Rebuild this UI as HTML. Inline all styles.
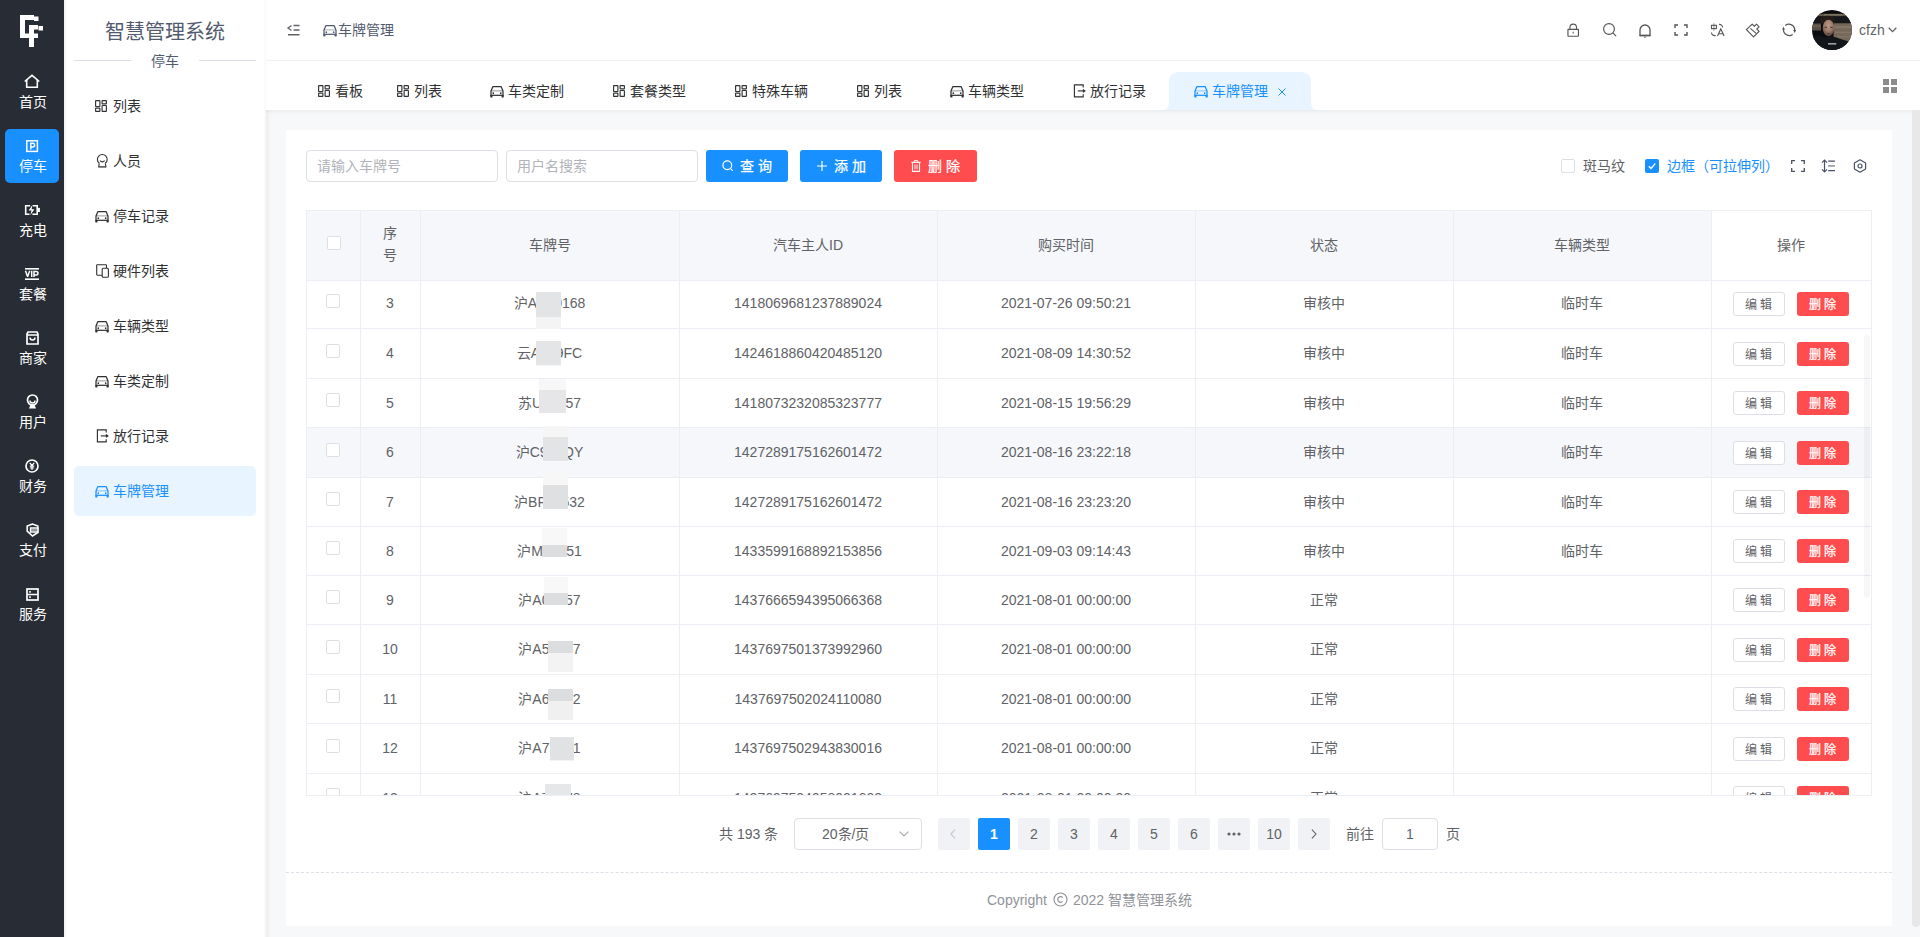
<!DOCTYPE html>
<html lang="zh-CN">
<head>
<meta charset="utf-8">
<title>车牌管理</title>
<style>
*{box-sizing:border-box;margin:0;padding:0}
html,body{width:1920px;height:937px;overflow:hidden;background:#f6f8f9;font-family:"Liberation Sans",sans-serif;font-size:14px;color:#606266}
.a{position:absolute}
.t{position:absolute;white-space:nowrap;line-height:20px}
svg{position:absolute;overflow:visible}
</style>
</head>
<body>
<div class="a" style="left:0px;top:0px;width:64px;height:937px;background:#282c34"></div>
<div class="a" style="left:64px;top:0px;width:202px;height:937px;background:#fff"></div>
<div class="a" style="left:64px;top:0px;width:3px;height:937px;background:linear-gradient(90deg,rgba(0,0,0,.06),rgba(0,0,0,0))"></div>
<div class="a" style="left:263px;top:0px;width:3px;height:937px;background:linear-gradient(90deg,rgba(0,0,0,0),rgba(0,0,0,.03))"></div>
<div class="a" style="left:266px;top:110px;width:5px;height:827px;background:linear-gradient(90deg,rgba(0,0,0,.045),rgba(0,0,0,0))"></div>
<div class="a" style="left:266px;top:0px;width:1654px;height:60px;background:#fff"></div>
<div class="a" style="left:266px;top:60px;width:1654px;height:1px;background:#f0f1f3"></div>
<div class="a" style="left:266px;top:61px;width:1654px;height:49px;background:#fff"></div>
<div class="a" style="left:266px;top:110px;width:1654px;height:4px;background:linear-gradient(180deg,rgba(0,0,0,.05),rgba(0,0,0,0))"></div>
<div class="a" style="left:286px;top:130px;width:1606px;height:796px;background:#fff"></div>
<div class="a" style="left:1912px;top:110px;width:8px;height:817px;background:#e8e8e8;border-radius:0 0 4px 4px"></div>
<svg style="left:0px;top:0px" width="64" height="60" viewBox="0 0 64 60"><g fill="#fff"><rect x="20" y="15" width="14" height="5"/><rect x="20" y="15" width="5" height="23"/><rect x="20" y="33.5" width="18" height="4.5"/><rect x="34" y="16.5" width="4.5" height="4.5"/><rect x="29" y="25" width="5" height="22"/><rect x="29" y="25" width="9" height="4.5"/><rect x="38.5" y="26" width="4.5" height="4.5"/></g><rect x="25" y="20" width="9" height="5" fill="#282c34"/></svg>
<div class="a" style="left:5px;top:129px;width:54px;height:54px;background:#1890ff;border-radius:5px"></div>
<svg style="left:24px;top:74px" width="16" height="15" viewBox="0 0 16 15"><path d="M0.7 7.5L8 1.3l7.3 6.2" fill="none" stroke="#fff" stroke-width="1.6"/><path d="M2.7 5.8V13.3H13.3V5.8" fill="none" stroke="#fff" stroke-width="1.6"/></svg>
<svg style="left:26px;top:140px" width="12" height="12" viewBox="0 0 12 12"><rect x="0.8" y="0.8" width="10.6" height="10.6" fill="none" stroke="#fff" stroke-width="1.5"/><path d="M4.8 9.6V3.2h1.9a1.9 1.9 0 0 1 0 3.8H4.8" fill="none" stroke="#fff" stroke-width="1.4"/></svg>
<svg style="left:24px;top:204px" width="17" height="12" viewBox="0 0 17 12"><path d="M6.2 1.7H1.7v8.5h3.8M8.7 1.7h4.5v8.5H8.4" fill="none" stroke="#fff" stroke-width="1.6"/><path d="M8.4 0.9L4.6 6.4h2.9L6.3 11.2l4.1-5.9H7.6z" fill="#fff"/><rect x="14" y="3.9" width="1.9" height="4.1" fill="#fff"/></svg>
<svg style="left:25px;top:268px" width="14" height="12" viewBox="0 0 14 12"><rect x="0" y="0" width="14" height="1.6" fill="#fff"/><rect x="0" y="10.4" width="14" height="1.6" fill="#fff"/><path d="M0.5 2.8L2.6 8.7 4.7 2.8" fill="none" stroke="#fff" stroke-width="1.5" stroke-linejoin="bevel"/><path d="M6.7 2.8V9M9 9V3.55h2.2a1.75 1.75 0 0 1 0 3.5H9" fill="none" stroke="#fff" stroke-width="1.5"/></svg>
<svg style="left:26px;top:331px" width="13" height="14" viewBox="0 0 13 14"><path d="M2 1h9l1 2v10H1V3z" fill="none" stroke="#fff" stroke-width="1.7"/><path d="M1 4h11" stroke="#fff" stroke-width="1.5"/><path d="M4 6.5a2.5 2.5 0 0 0 5 0" fill="none" stroke="#fff" stroke-width="1.5"/></svg>
<svg style="left:26px;top:394px" width="13" height="15" viewBox="0 0 13 15"><circle cx="6.5" cy="6" r="5" fill="none" stroke="#fff" stroke-width="1.7"/><path d="M4 6.5a2.5 2.5 0 0 0 5 0" fill="none" stroke="#fff" stroke-width="1.4"/><path d="M3 14.5l1.5-4h4l1.5 4z" fill="#fff"/></svg>
<svg style="left:25px;top:459px" width="14" height="14" viewBox="0 0 14 14"><circle cx="7" cy="7" r="6" fill="none" stroke="#fff" stroke-width="1.7"/><path d="M4.8 3.8L7 6.5l2.2-2.7M7 6.5V11M4.8 7.2h4.4M4.8 9h4.4" fill="none" stroke="#fff" stroke-width="1.2"/></svg>
<svg style="left:26px;top:523px" width="13" height="14" viewBox="0 0 13 14"><path d="M6.5 1L1.2 3v5.2L6.5 13l5.3-3.5V3z" fill="none" stroke="#fff" stroke-width="1.6"/><rect x="4.2" y="5" width="8" height="4" fill="#282c34"/><path d="M4.5 5h7.5v4H4.5z" fill="none" stroke="#fff" stroke-width="1.4"/><path d="M4.5 7h7.5" stroke="#fff" stroke-width="1"/></svg>
<svg style="left:26px;top:588px" width="13" height="13" viewBox="0 0 13 13"><rect x="1" y="1" width="11" height="11" fill="none" stroke="#fff" stroke-width="1.7"/><path d="M1 6.5h11" stroke="#fff" stroke-width="1.5"/><rect x="3" y="3.2" width="2" height="1.4" fill="#fff"/><rect x="3" y="8.4" width="2" height="1.4" fill="#fff"/></svg>
<div class="t" style="left:3.0px;top:92px;width:60px;text-align:center;color:#fff">首页</div>
<div class="t" style="left:3.0px;top:156px;width:60px;text-align:center;color:#fff">停车</div>
<div class="t" style="left:3.0px;top:220px;width:60px;text-align:center;color:#fff">充电</div>
<div class="t" style="left:3.0px;top:284px;width:60px;text-align:center;color:#fff">套餐</div>
<div class="t" style="left:3.0px;top:348px;width:60px;text-align:center;color:#fff">商家</div>
<div class="t" style="left:3.0px;top:412px;width:60px;text-align:center;color:#fff">用户</div>
<div class="t" style="left:3.0px;top:476px;width:60px;text-align:center;color:#fff">财务</div>
<div class="t" style="left:3.0px;top:540px;width:60px;text-align:center;color:#fff">支付</div>
<div class="t" style="left:3.0px;top:604px;width:60px;text-align:center;color:#fff">服务</div>
<div class="t" style="left:105px;top:18px;font-size:20px;line-height:28px;color:#515a6e">智慧管理系统</div>
<div class="a" style="left:74px;top:60px;width:57px;height:1px;background:#dcdfe6"></div>
<div class="a" style="left:199px;top:60px;width:57px;height:1px;background:#dcdfe6"></div>
<div class="t" style="left:151px;top:51px;color:#515a6e">停车</div>
<div class="a" style="left:74px;top:466px;width:182px;height:50px;background:#e8f4ff;border-radius:5px"></div>
<svg style="left:95px;top:100px" width="12" height="12" viewBox="0 0 12 12"><g fill="none" stroke="#303133" stroke-width="1.15"><rect x="0.6" y="0.6" width="4.3" height="5.9" rx=".5"/><rect x="7.1" y="0.6" width="4.3" height="3.3" rx=".5"/><rect x="0.6" y="8.1" width="4.3" height="3.3" rx=".5"/><rect x="7.1" y="5.5" width="4.3" height="5.9" rx=".5"/></g></svg>
<div class="t" style="left:113px;top:96px;color:#303133">列表</div>
<svg style="left:96px;top:154px" width="12" height="14" viewBox="0 0 12 14"><path d="M3.3 9.3A4.9 4.9 0 1 1 9.3 9.3" fill="none" stroke="#303133" stroke-width="1.1"/><path d="M3.9 6.7Q6.3 9 8.7 6.7" fill="none" stroke="#303133" stroke-width="1.1"/><path d="M3.3 9.3L2.7 12.6M9.3 9.3l.6 3.3" fill="none" stroke="#303133" stroke-width="1.1"/><path d="M2.2 12.9h8.2" stroke="#303133" stroke-width="1.3"/></svg>
<div class="t" style="left:113px;top:151px;color:#303133">人员</div>
<svg style="left:95px;top:210px" width="14" height="13" viewBox="0 0 14 13"><path d="M1 11.6V6.1L2.8 1.7h8.4L13 6.1v5.5" fill="none" stroke="#303133" stroke-width="1.25" stroke-linejoin="round"/><path d="M1 5.9h12" stroke="#303133" stroke-width="1" opacity=".5"/><path d="M1 10.3h12" stroke="#303133" stroke-width="1.25"/><circle cx="3.3" cy="8.2" r=".85" fill="#303133"/><circle cx="10.7" cy="8.2" r=".85" fill="#303133"/><rect x="0.35" y="10" width="2.1" height="2.5" rx=".6" fill="#303133"/><rect x="11.55" y="10" width="2.1" height="2.5" rx=".6" fill="#303133"/></svg>
<div class="t" style="left:113px;top:206px;color:#303133">停车记录</div>
<svg style="left:96px;top:264px" width="13" height="14" viewBox="0 0 13 14"><path d="M6.2 11.2H1.3a.6.6 0 0 1-.6-.6V1.3a.6.6 0 0 1 .6-.6h8.6a.6.6 0 0 1 .6.6v2.8" fill="none" stroke="#303133" stroke-width="1.1"/><rect x="6.2" y="4.2" width="6.2" height="9" rx="1" fill="none" stroke="#303133" stroke-width="1.1"/></svg>
<div class="t" style="left:113px;top:261px;color:#303133">硬件列表</div>
<svg style="left:95px;top:320px" width="14" height="13" viewBox="0 0 14 13"><path d="M1 11.6V6.1L2.8 1.7h8.4L13 6.1v5.5" fill="none" stroke="#303133" stroke-width="1.25" stroke-linejoin="round"/><path d="M1 5.9h12" stroke="#303133" stroke-width="1" opacity=".5"/><path d="M1 10.3h12" stroke="#303133" stroke-width="1.25"/><circle cx="3.3" cy="8.2" r=".85" fill="#303133"/><circle cx="10.7" cy="8.2" r=".85" fill="#303133"/><rect x="0.35" y="10" width="2.1" height="2.5" rx=".6" fill="#303133"/><rect x="11.55" y="10" width="2.1" height="2.5" rx=".6" fill="#303133"/></svg>
<div class="t" style="left:113px;top:316px;color:#303133">车辆类型</div>
<svg style="left:95px;top:375px" width="14" height="13" viewBox="0 0 14 13"><path d="M1 11.6V6.1L2.8 1.7h8.4L13 6.1v5.5" fill="none" stroke="#303133" stroke-width="1.25" stroke-linejoin="round"/><path d="M1 5.9h12" stroke="#303133" stroke-width="1" opacity=".5"/><path d="M1 10.3h12" stroke="#303133" stroke-width="1.25"/><circle cx="3.3" cy="8.2" r=".85" fill="#303133"/><circle cx="10.7" cy="8.2" r=".85" fill="#303133"/><rect x="0.35" y="10" width="2.1" height="2.5" rx=".6" fill="#303133"/><rect x="11.55" y="10" width="2.1" height="2.5" rx=".6" fill="#303133"/></svg>
<div class="t" style="left:113px;top:371px;color:#303133">车类定制</div>
<svg style="left:96px;top:429px" width="13" height="14" viewBox="0 0 13 14"><path d="M10.2 3.6V0.9H1.4v12h8.8v-2.7" fill="none" stroke="#303133" stroke-width="1.15"/><path d="M4.8 6.9h5.4" stroke="#303133" stroke-width="1.15"/><path d="M9.9 4.7L12.8 6.9 9.9 9.1z" fill="#303133"/></svg>
<div class="t" style="left:113px;top:426px;color:#303133">放行记录</div>
<svg style="left:95px;top:485px" width="14" height="13" viewBox="0 0 14 13"><path d="M1 11.6V6.1L2.8 1.7h8.4L13 6.1v5.5" fill="none" stroke="#1890ff" stroke-width="1.25" stroke-linejoin="round"/><path d="M1 5.9h12" stroke="#1890ff" stroke-width="1" opacity=".5"/><path d="M1 10.3h12" stroke="#1890ff" stroke-width="1.25"/><circle cx="3.3" cy="8.2" r=".85" fill="#1890ff"/><circle cx="10.7" cy="8.2" r=".85" fill="#1890ff"/><rect x="0.35" y="10" width="2.1" height="2.5" rx=".6" fill="#1890ff"/><rect x="11.55" y="10" width="2.1" height="2.5" rx=".6" fill="#1890ff"/></svg>
<div class="t" style="left:113px;top:481px;color:#1890ff">车牌管理</div>
<svg style="left:287px;top:24px" width="13" height="12" viewBox="0 0 13 12"><path d="M4.5 1.5L1 4l3.5 2.5" fill="none" stroke="#606266" stroke-width="1.3"/><path d="M6.5 1.5h6M6.5 6h6M1 10.8h11.5" stroke="#606266" stroke-width="1.4"/></svg>
<svg style="left:323px;top:24px" width="14" height="13" viewBox="0 0 14 13"><path d="M1 11.6V6.1L2.8 1.7h8.4L13 6.1v5.5" fill="none" stroke="#515a6e" stroke-width="1.25" stroke-linejoin="round"/><path d="M1 5.9h12" stroke="#515a6e" stroke-width="1" opacity=".5"/><path d="M1 10.3h12" stroke="#515a6e" stroke-width="1.25"/><circle cx="3.3" cy="8.2" r=".85" fill="#515a6e"/><circle cx="10.7" cy="8.2" r=".85" fill="#515a6e"/><rect x="0.35" y="10" width="2.1" height="2.5" rx=".6" fill="#515a6e"/><rect x="11.55" y="10" width="2.1" height="2.5" rx=".6" fill="#515a6e"/></svg>
<div class="t" style="left:338px;top:20px;color:#515a6e">车牌管理</div>
<svg style="left:1567px;top:23px" width="13" height="14" viewBox="0 0 13 14"><path d="M2.9 6.3V4.4a3.3 3.3 0 0 1 6.6 0v1.9" fill="none" stroke="#555555" stroke-width="1.1"/><rect x="0.95" y="6.3" width="10.5" height="6.9" rx=".4" fill="none" stroke="#555555" stroke-width="1.15"/><path d="M6.2 8.8v1.6" stroke="#555555" stroke-width="1.1"/></svg>
<svg style="left:1603px;top:23px" width="14" height="14" viewBox="0 0 14 14"><circle cx="6" cy="6" r="5.4" fill="none" stroke="#555555" stroke-width="1.15"/><path d="M9.9 9.9l3.2 3.2" stroke="#555555" stroke-width="1.15"/></svg>
<svg style="left:1639px;top:23px" width="12" height="15" viewBox="0 0 12 15"><path d="M1 12.5V7a5 5 0 0 1 10 0v5.5z" fill="none" stroke="#555555" stroke-width="1.3" stroke-linejoin="round"/><path d="M0.5 12.5h11" stroke="#555555" stroke-width="1.3"/><path d="M4.5 13.8h3L6 15z" fill="#555555"/></svg>
<svg style="left:1674px;top:24px" width="14" height="12" viewBox="0 0 14 12"><path d="M1 4V1h3M10 1h3v3M13 8v3h-3M4 11H1V8" fill="none" stroke="#555555" stroke-width="1.4"/></svg>
<svg style="left:1710px;top:23px" width="15" height="14" viewBox="0 0 15 14"><rect x="1.5" y="2.3" width="4.9" height="3.3" fill="none" stroke="#555555" stroke-width="1.1"/><path d="M3.95 0.3V7.8" stroke="#555555" stroke-width="1" opacity=".65"/><path d="M9.1 1.4A3.1 3.1 0 0 1 12.6 4.4M1.5 9.4A3.1 3.1 0 0 0 5.7 12.4" fill="none" stroke="#555555" stroke-width="1.1"/><path d="M7.5 12.9L10.8 5.9 14.1 12.9M8.7 10.7h4.2" fill="none" stroke="#555555" stroke-width="1.1"/></svg>
<svg style="left:1745px;top:23px" width="15" height="15" viewBox="0 0 15 15"><path d="M1.4 6.6L7.2 1.1 9.3 3.4 11.5 1.1 14.1 3.8 11.8 6 14.1 8.3 8.5 13.8Z" fill="none" stroke="#555555" stroke-width="1.15" stroke-linejoin="round"/><path d="M5.3 5.4l6.2 5.3" stroke="#555555" stroke-width="1.1"/></svg>
<svg style="left:1782px;top:23px" width="15" height="14" viewBox="0 0 15 14"><path d="M3.3 2.5A5.8 5.8 0 0 1 12.7 7.3M10.7 11.4A5.8 5.8 0 0 1 1.5 6.3" fill="none" stroke="#555555" stroke-width="1.2"/><path d="M11.2 7.1H14.2L12.7 9.9ZM0 6.5H3L1.5 3.7Z" fill="#555555"/></svg>
<svg style="left:1812px;top:10px" width="40" height="40" viewBox="0 0 40 40"><defs><clipPath id="av"><circle cx="20" cy="20" r="20"/></clipPath><radialGradient id="fc" cx=".5" cy=".35" r=".65"><stop offset="0" stop-color="#bd998a"/><stop offset=".55" stop-color="#9c7868"/><stop offset="1" stop-color="#5a463e"/></radialGradient></defs><g clip-path="url(#av)"><rect width="40" height="40" fill="#0b0c0f"/><rect x="3" y="3.8" width="32" height="2.6" fill="#5f574b"/><rect x="12" y="4.2" width="18" height="1.2" fill="#8e8270" opacity=".8"/><rect x="0" y="6.4" width="40" height="7" fill="#15171b"/><path d="M21.5 13.2H40V31L30 32 21.5 27z" fill="#75685a"/><path d="M22 16h18v2.2H22zM23 21.5h17v1.8H23zM25 26h15v1.5H25z" fill="#8f826e" opacity=".55"/><path d="M0 13.5H9V20.5H0z" fill="#5a5145"/><path d="M0 15.5h8.5v1.6H0z" fill="#7a6e5e" opacity=".6"/><ellipse cx="15.5" cy="10.5" rx="7.5" ry="4.8" fill="#231c19"/><ellipse cx="16.5" cy="18" rx="5.8" ry="8.3" fill="url(#fc)"/><path d="M12.6 17.3h2.4M18.2 17.3h2.4" stroke="#3f302a" stroke-width="1"/><path d="M14.8 23.8h3.6" stroke="#4f3a33" stroke-width="1"/><path d="M0 26.5C5 25 9 26 13 27.5L20 26.5C26 27.5 32 30.5 40 32.5V40H0z" fill="#121519"/><rect x="16" y="33" width="8.3" height="1.6" fill="#cfcfcf" opacity=".75"/></g></svg>
<div class="t" style="left:1859px;top:20px;color:#606266">cfzh</div>
<svg style="left:1888px;top:27px" width="9" height="6" viewBox="0 0 9 6"><path d="M0.7 0.8L4.5 4.6 8.3 0.8" fill="none" stroke="#606266" stroke-width="1.3"/></svg>
<svg style="left:1163px;top:72px" width="154" height="38" viewBox="0 0 154 38"><path d="M0 38C4.5 38 6 34 6 29V10Q6 0 16 0H138Q148 0 148 10V29C148 34 149.5 38 154 38Z" fill="#e8f4ff"/></svg>
<svg style="left:318px;top:85px" width="12" height="12" viewBox="0 0 12 12"><g fill="none" stroke="#303133" stroke-width="1.15"><rect x="0.6" y="0.6" width="4.3" height="5.9" rx=".5"/><rect x="7.1" y="0.6" width="4.3" height="3.3" rx=".5"/><rect x="0.6" y="8.1" width="4.3" height="3.3" rx=".5"/><rect x="7.1" y="5.5" width="4.3" height="5.9" rx=".5"/></g></svg>
<div class="t" style="left:335px;top:81px;color:#303133">看板</div>
<svg style="left:397px;top:85px" width="12" height="12" viewBox="0 0 12 12"><g fill="none" stroke="#303133" stroke-width="1.15"><rect x="0.6" y="0.6" width="4.3" height="5.9" rx=".5"/><rect x="7.1" y="0.6" width="4.3" height="3.3" rx=".5"/><rect x="0.6" y="8.1" width="4.3" height="3.3" rx=".5"/><rect x="7.1" y="5.5" width="4.3" height="5.9" rx=".5"/></g></svg>
<div class="t" style="left:414px;top:81px;color:#303133">列表</div>
<svg style="left:490px;top:85px" width="14" height="13" viewBox="0 0 14 13"><path d="M1 11.6V6.1L2.8 1.7h8.4L13 6.1v5.5" fill="none" stroke="#303133" stroke-width="1.25" stroke-linejoin="round"/><path d="M1 5.9h12" stroke="#303133" stroke-width="1" opacity=".5"/><path d="M1 10.3h12" stroke="#303133" stroke-width="1.25"/><circle cx="3.3" cy="8.2" r=".85" fill="#303133"/><circle cx="10.7" cy="8.2" r=".85" fill="#303133"/><rect x="0.35" y="10" width="2.1" height="2.5" rx=".6" fill="#303133"/><rect x="11.55" y="10" width="2.1" height="2.5" rx=".6" fill="#303133"/></svg>
<div class="t" style="left:508px;top:81px;color:#303133">车类定制</div>
<svg style="left:613px;top:85px" width="12" height="12" viewBox="0 0 12 12"><g fill="none" stroke="#303133" stroke-width="1.15"><rect x="0.6" y="0.6" width="4.3" height="5.9" rx=".5"/><rect x="7.1" y="0.6" width="4.3" height="3.3" rx=".5"/><rect x="0.6" y="8.1" width="4.3" height="3.3" rx=".5"/><rect x="7.1" y="5.5" width="4.3" height="5.9" rx=".5"/></g></svg>
<div class="t" style="left:630px;top:81px;color:#303133">套餐类型</div>
<svg style="left:735px;top:85px" width="12" height="12" viewBox="0 0 12 12"><g fill="none" stroke="#303133" stroke-width="1.15"><rect x="0.6" y="0.6" width="4.3" height="5.9" rx=".5"/><rect x="7.1" y="0.6" width="4.3" height="3.3" rx=".5"/><rect x="0.6" y="8.1" width="4.3" height="3.3" rx=".5"/><rect x="7.1" y="5.5" width="4.3" height="5.9" rx=".5"/></g></svg>
<div class="t" style="left:752px;top:81px;color:#303133">特殊车辆</div>
<svg style="left:857px;top:85px" width="12" height="12" viewBox="0 0 12 12"><g fill="none" stroke="#303133" stroke-width="1.15"><rect x="0.6" y="0.6" width="4.3" height="5.9" rx=".5"/><rect x="7.1" y="0.6" width="4.3" height="3.3" rx=".5"/><rect x="0.6" y="8.1" width="4.3" height="3.3" rx=".5"/><rect x="7.1" y="5.5" width="4.3" height="5.9" rx=".5"/></g></svg>
<div class="t" style="left:874px;top:81px;color:#303133">列表</div>
<svg style="left:950px;top:85px" width="14" height="13" viewBox="0 0 14 13"><path d="M1 11.6V6.1L2.8 1.7h8.4L13 6.1v5.5" fill="none" stroke="#303133" stroke-width="1.25" stroke-linejoin="round"/><path d="M1 5.9h12" stroke="#303133" stroke-width="1" opacity=".5"/><path d="M1 10.3h12" stroke="#303133" stroke-width="1.25"/><circle cx="3.3" cy="8.2" r=".85" fill="#303133"/><circle cx="10.7" cy="8.2" r=".85" fill="#303133"/><rect x="0.35" y="10" width="2.1" height="2.5" rx=".6" fill="#303133"/><rect x="11.55" y="10" width="2.1" height="2.5" rx=".6" fill="#303133"/></svg>
<div class="t" style="left:968px;top:81px;color:#303133">车辆类型</div>
<svg style="left:1073px;top:84px" width="13" height="14" viewBox="0 0 13 14"><path d="M10.2 3.6V0.9H1.4v12h8.8v-2.7" fill="none" stroke="#303133" stroke-width="1.15"/><path d="M4.8 6.9h5.4" stroke="#303133" stroke-width="1.15"/><path d="M9.9 4.7L12.8 6.9 9.9 9.1z" fill="#303133"/></svg>
<div class="t" style="left:1090px;top:81px;color:#303133">放行记录</div>
<svg style="left:1194px;top:85px" width="14" height="13" viewBox="0 0 14 13"><path d="M1 11.6V6.1L2.8 1.7h8.4L13 6.1v5.5" fill="none" stroke="#1890ff" stroke-width="1.25" stroke-linejoin="round"/><path d="M1 5.9h12" stroke="#1890ff" stroke-width="1" opacity=".5"/><path d="M1 10.3h12" stroke="#1890ff" stroke-width="1.25"/><circle cx="3.3" cy="8.2" r=".85" fill="#1890ff"/><circle cx="10.7" cy="8.2" r=".85" fill="#1890ff"/><rect x="0.35" y="10" width="2.1" height="2.5" rx=".6" fill="#1890ff"/><rect x="11.55" y="10" width="2.1" height="2.5" rx=".6" fill="#1890ff"/></svg>
<div class="t" style="left:1212px;top:81px;color:#1890ff">车牌管理</div>
<svg style="left:1278px;top:88px" width="8" height="8" viewBox="0 0 8 8"><path d="M0.5 0.5l7 7M7.5 0.5l-7 7" stroke="#1890ff" stroke-width="1"/></svg>
<svg style="left:1883px;top:79px" width="14" height="14" viewBox="0 0 14 14"><g fill="#8c8c8c"><rect x="0" y="0" width="6" height="6"/><rect x="8" y="0" width="6" height="6"/><rect x="0" y="8" width="6" height="6"/><rect x="8" y="8" width="6" height="6"/></g></svg>
<div class="a" style="left:306px;top:150px;width:192px;height:32px;border:1px solid #dcdfe6;border-radius:4px;background:#fff"></div>
<div class="t" style="left:317px;top:156px;color:#b0b3b9">请输入车牌号</div>
<div class="a" style="left:506px;top:150px;width:192px;height:32px;border:1px solid #dcdfe6;border-radius:4px;background:#fff"></div>
<div class="t" style="left:517px;top:156px;color:#b0b3b9">用户名搜索</div>
<div class="a" style="left:706px;top:150px;width:82px;height:32px;background:#1890ff;border-radius:3px"></div>
<svg style="left:722px;top:160px" width="12" height="12" viewBox="0 0 12 12"><circle cx="5.3" cy="5.3" r="4.4" fill="none" stroke="#fff" stroke-width="1.2"/><path d="M8.6 8.6l2.2 2.2" stroke="#fff" stroke-width="1.2"/></svg>
<div class="t" style="left:740px;top:156px;color:#fff;font-weight:500;-webkit-text-stroke:.25px currentColor">查 询</div>
<div class="a" style="left:800px;top:150px;width:82px;height:32px;background:#1890ff;border-radius:3px"></div>
<svg style="left:817px;top:161px" width="10" height="10" viewBox="0 0 10 10"><path d="M5 0v10M0 5h10" stroke="#fff" stroke-width="1.2"/></svg>
<div class="t" style="left:834px;top:156px;color:#fff;font-weight:500;-webkit-text-stroke:.25px currentColor">添 加</div>
<div class="a" style="left:894px;top:150px;width:83px;height:32px;background:#ff4d4f;border-radius:3px"></div>
<svg style="left:911px;top:160px" width="10" height="12" viewBox="0 0 10 12"><path d="M0.3 2.3h9.4" stroke="#fff" stroke-width="1.1"/><path d="M3.3 2.3V0.7h3.4v1.6" fill="none" stroke="#fff" stroke-width="1"/><path d="M1.5 2.3v9.1h7v-9.1" fill="none" stroke="#fff" stroke-width="1.1"/><path d="M4 4.6v4.6M6 4.6v4.6" stroke="#fff" stroke-width=".9"/></svg>
<div class="t" style="left:928px;top:156px;color:#fff;font-weight:500;-webkit-text-stroke:.25px currentColor">删 除</div>
<div class="a" style="left:1561px;top:159px;width:14px;height:14px;border:1px solid #dcdfe6;border-radius:2px;background:#fff"></div>
<div class="t" style="left:1583px;top:156px;color:#606266">斑马纹</div>
<div class="a" style="left:1645px;top:159px;width:14px;height:14px;background:#1890ff;border-radius:2px"></div>
<svg style="left:1648px;top:162px" width="8" height="8" viewBox="0 0 8 8"><path d="M0.8 4.2L3 6.5 7.3 1.5" fill="none" stroke="#fff" stroke-width="1.3"/></svg>
<div class="t" style="left:1667px;top:156px;color:#1890ff">边框（可拉伸列）</div>
<svg style="left:1791px;top:160px" width="14" height="12" viewBox="0 0 14 12"><path d="M0.7 4V0.7h3.3M10 0.7h3.3V4M13.3 8v3.3H10M4 11.3H0.7V8" fill="none" stroke="#4a5266" stroke-width="1.3"/></svg>
<svg style="left:1822px;top:160px" width="14" height="12" viewBox="0 0 14 12"><path d="M2.5 0.5v11" stroke="#4a5266" stroke-width="1.2"/><path d="M0 2.6L2.5 0 5 2.6M0 9.4L2.5 12 5 9.4" fill="none" stroke="#4a5266" stroke-width="1.2"/><path d="M6.2 1.2h6.8M6.2 10.6h6.8" stroke="#4a5266" stroke-width="1.2"/><path d="M6.2 5.9h6.8" stroke="#8a9098" stroke-width="1.5"/></svg>
<svg style="left:1853px;top:159px" width="14" height="14" viewBox="0 0 14 14"><path d="M7 0.8L12.6 4v6L7 13.2 1.4 10V4z" fill="none" stroke="#4a5266" stroke-width="1.2" stroke-linejoin="round"/><circle cx="7" cy="7" r="2" fill="none" stroke="#4a5266" stroke-width="1.2"/></svg>
<div class="a" style="left:307px;top:211px;width:1404px;height:69px;background:#f5f7fa"></div>
<div class="a" style="left:307px;top:428px;width:1564px;height:49px;background:#f5f7fa"></div>
<div class="a" style="left:306px;top:210px;width:1566px;height:1px;background:#ebeef5"></div>
<div class="a" style="left:306px;top:280px;width:1566px;height:1px;background:#ebeef5"></div>
<div class="a" style="left:306px;top:328px;width:1566px;height:1px;background:#ebeef5"></div>
<div class="a" style="left:306px;top:378px;width:1566px;height:1px;background:#ebeef5"></div>
<div class="a" style="left:306px;top:427px;width:1566px;height:1px;background:#ebeef5"></div>
<div class="a" style="left:306px;top:477px;width:1566px;height:1px;background:#ebeef5"></div>
<div class="a" style="left:306px;top:526px;width:1566px;height:1px;background:#ebeef5"></div>
<div class="a" style="left:306px;top:575px;width:1566px;height:1px;background:#ebeef5"></div>
<div class="a" style="left:306px;top:624px;width:1566px;height:1px;background:#ebeef5"></div>
<div class="a" style="left:306px;top:674px;width:1566px;height:1px;background:#ebeef5"></div>
<div class="a" style="left:306px;top:723px;width:1566px;height:1px;background:#ebeef5"></div>
<div class="a" style="left:306px;top:773px;width:1566px;height:1px;background:#ebeef5"></div>
<div class="a" style="left:306px;top:795px;width:1566px;height:1px;background:#ebeef5"></div>
<div class="a" style="left:306px;top:210px;width:1px;height:586px;background:#ebeef5"></div>
<div class="a" style="left:360px;top:210px;width:1px;height:586px;background:#ebeef5"></div>
<div class="a" style="left:420px;top:210px;width:1px;height:586px;background:#ebeef5"></div>
<div class="a" style="left:679px;top:210px;width:1px;height:586px;background:#ebeef5"></div>
<div class="a" style="left:937px;top:210px;width:1px;height:586px;background:#ebeef5"></div>
<div class="a" style="left:1195px;top:210px;width:1px;height:586px;background:#ebeef5"></div>
<div class="a" style="left:1453px;top:210px;width:1px;height:586px;background:#ebeef5"></div>
<div class="a" style="left:1711px;top:210px;width:1px;height:586px;background:#ebeef5"></div>
<div class="a" style="left:1871px;top:210px;width:1px;height:586px;background:#ebeef5"></div>
<div class="a" style="left:327px;top:236px;width:14px;height:14px;border:1px solid #dcdfe6;border-radius:2px;background:#fff"></div>
<div class="t" style="left:370.0px;top:223px;width:40px;text-align:center;color:#606266">序</div>
<div class="t" style="left:370.0px;top:245px;width:40px;text-align:center;color:#606266">号</div>
<div class="t" style="left:349.5px;top:235px;width:400px;text-align:center;color:#606266">车牌号</div>
<div class="t" style="left:608.0px;top:235px;width:400px;text-align:center;color:#606266">汽车主人ID</div>
<div class="t" style="left:866.0px;top:235px;width:400px;text-align:center;color:#606266">购买时间</div>
<div class="t" style="left:1124.0px;top:235px;width:400px;text-align:center;color:#606266">状态</div>
<div class="t" style="left:1382.0px;top:235px;width:400px;text-align:center;color:#606266">车辆类型</div>
<div class="t" style="left:1591.0px;top:235px;width:400px;text-align:center;color:#606266">操作</div>
<div class="a" style="left:307px;top:281px;width:1564px;height:514px;overflow:hidden">
<div class="a" style="left:19px;top:13px;width:14px;height:14px;border:1px solid #dcdfe6;border-radius:2px;background:#fff"></div>
<div class="t" style="left:-117.0px;top:12px;width:400px;text-align:center;color:#606266">3</div>
<div class="t" style="left:42.5px;top:12px;width:400px;text-align:center;color:#606266">沪AB00168</div>
<div class="t" style="left:301.0px;top:12px;width:400px;text-align:center;color:#606266">1418069681237889024</div>
<div class="t" style="left:559.0px;top:12px;width:400px;text-align:center;color:#606266">2021-07-26 09:50:21</div>
<div class="t" style="left:817.0px;top:12px;width:400px;text-align:center;color:#606266">审核中</div>
<div class="t" style="left:1075.0px;top:12px;width:400px;text-align:center;color:#606266">临时车</div>
<div class="a" style="left:1426px;top:11px;width:52px;height:24px;border:1px solid #dcdfe6;border-radius:3px;background:#fff"></div>
<div class="t" style="left:1438px;top:16px;color:#606266;font-size:12px;line-height:16px">编 辑</div>
<div class="a" style="left:1490px;top:11px;width:52px;height:24px;background:#ff4d4f;border-radius:3px"></div>
<div class="t" style="left:1502px;top:16px;color:#fff;font-size:12px;line-height:16px;font-weight:500;-webkit-text-stroke:.25px currentColor">删 除</div>
<div class="a" style="left:19px;top:63px;width:14px;height:14px;border:1px solid #dcdfe6;border-radius:2px;background:#fff"></div>
<div class="t" style="left:-117.0px;top:62.0px;width:400px;text-align:center;color:#606266">4</div>
<div class="t" style="left:42.5px;top:62.0px;width:400px;text-align:center;color:#606266">云A129FC</div>
<div class="t" style="left:301.0px;top:62.0px;width:400px;text-align:center;color:#606266">1424618860420485120</div>
<div class="t" style="left:559.0px;top:62.0px;width:400px;text-align:center;color:#606266">2021-08-09 14:30:52</div>
<div class="t" style="left:817.0px;top:62.0px;width:400px;text-align:center;color:#606266">审核中</div>
<div class="t" style="left:1075.0px;top:62.0px;width:400px;text-align:center;color:#606266">临时车</div>
<div class="a" style="left:1426px;top:61px;width:52px;height:24px;border:1px solid #dcdfe6;border-radius:3px;background:#fff"></div>
<div class="t" style="left:1438px;top:66px;color:#606266;font-size:12px;line-height:16px">编 辑</div>
<div class="a" style="left:1490px;top:61px;width:52px;height:24px;background:#ff4d4f;border-radius:3px"></div>
<div class="t" style="left:1502px;top:66px;color:#fff;font-size:12px;line-height:16px;font-weight:500;-webkit-text-stroke:.25px currentColor">删 除</div>
<div class="a" style="left:19px;top:112px;width:14px;height:14px;border:1px solid #dcdfe6;border-radius:2px;background:#fff"></div>
<div class="t" style="left:-117.0px;top:111.5px;width:400px;text-align:center;color:#606266">5</div>
<div class="t" style="left:42.5px;top:111.5px;width:400px;text-align:center;color:#606266">苏U12757</div>
<div class="t" style="left:301.0px;top:111.5px;width:400px;text-align:center;color:#606266">1418073232085323777</div>
<div class="t" style="left:559.0px;top:111.5px;width:400px;text-align:center;color:#606266">2021-08-15 19:56:29</div>
<div class="t" style="left:817.0px;top:111.5px;width:400px;text-align:center;color:#606266">审核中</div>
<div class="t" style="left:1075.0px;top:111.5px;width:400px;text-align:center;color:#606266">临时车</div>
<div class="a" style="left:1426px;top:110px;width:52px;height:24px;border:1px solid #dcdfe6;border-radius:3px;background:#fff"></div>
<div class="t" style="left:1438px;top:115px;color:#606266;font-size:12px;line-height:16px">编 辑</div>
<div class="a" style="left:1490px;top:110px;width:52px;height:24px;background:#ff4d4f;border-radius:3px"></div>
<div class="t" style="left:1502px;top:115px;color:#fff;font-size:12px;line-height:16px;font-weight:500;-webkit-text-stroke:.25px currentColor">删 除</div>
<div class="a" style="left:19px;top:162px;width:14px;height:14px;border:1px solid #dcdfe6;border-radius:2px;background:#fff"></div>
<div class="t" style="left:-117.0px;top:161.0px;width:400px;text-align:center;color:#606266">6</div>
<div class="t" style="left:42.5px;top:161.0px;width:400px;text-align:center;color:#606266">沪C912QY</div>
<div class="t" style="left:301.0px;top:161.0px;width:400px;text-align:center;color:#606266">1427289175162601472</div>
<div class="t" style="left:559.0px;top:161.0px;width:400px;text-align:center;color:#606266">2021-08-16 23:22:18</div>
<div class="t" style="left:817.0px;top:161.0px;width:400px;text-align:center;color:#606266">审核中</div>
<div class="t" style="left:1075.0px;top:161.0px;width:400px;text-align:center;color:#606266">临时车</div>
<div class="a" style="left:1426px;top:160px;width:52px;height:24px;border:1px solid #dcdfe6;border-radius:3px;background:#fff"></div>
<div class="t" style="left:1438px;top:165px;color:#606266;font-size:12px;line-height:16px">编 辑</div>
<div class="a" style="left:1490px;top:160px;width:52px;height:24px;background:#ff4d4f;border-radius:3px"></div>
<div class="t" style="left:1502px;top:165px;color:#fff;font-size:12px;line-height:16px;font-weight:500;-webkit-text-stroke:.25px currentColor">删 除</div>
<div class="a" style="left:19px;top:211px;width:14px;height:14px;border:1px solid #dcdfe6;border-radius:2px;background:#fff"></div>
<div class="t" style="left:-117.0px;top:210.5px;width:400px;text-align:center;color:#606266">7</div>
<div class="t" style="left:42.5px;top:210.5px;width:400px;text-align:center;color:#606266">沪BF12532</div>
<div class="t" style="left:301.0px;top:210.5px;width:400px;text-align:center;color:#606266">1427289175162601472</div>
<div class="t" style="left:559.0px;top:210.5px;width:400px;text-align:center;color:#606266">2021-08-16 23:23:20</div>
<div class="t" style="left:817.0px;top:210.5px;width:400px;text-align:center;color:#606266">审核中</div>
<div class="t" style="left:1075.0px;top:210.5px;width:400px;text-align:center;color:#606266">临时车</div>
<div class="a" style="left:1426px;top:209px;width:52px;height:24px;border:1px solid #dcdfe6;border-radius:3px;background:#fff"></div>
<div class="t" style="left:1438px;top:214px;color:#606266;font-size:12px;line-height:16px">编 辑</div>
<div class="a" style="left:1490px;top:209px;width:52px;height:24px;background:#ff4d4f;border-radius:3px"></div>
<div class="t" style="left:1502px;top:214px;color:#fff;font-size:12px;line-height:16px;font-weight:500;-webkit-text-stroke:.25px currentColor">删 除</div>
<div class="a" style="left:19px;top:260px;width:14px;height:14px;border:1px solid #dcdfe6;border-radius:2px;background:#fff"></div>
<div class="t" style="left:-117.0px;top:259.5px;width:400px;text-align:center;color:#606266">8</div>
<div class="t" style="left:42.5px;top:259.5px;width:400px;text-align:center;color:#606266">沪M12551</div>
<div class="t" style="left:301.0px;top:259.5px;width:400px;text-align:center;color:#606266">1433599168892153856</div>
<div class="t" style="left:559.0px;top:259.5px;width:400px;text-align:center;color:#606266">2021-09-03 09:14:43</div>
<div class="t" style="left:817.0px;top:259.5px;width:400px;text-align:center;color:#606266">审核中</div>
<div class="t" style="left:1075.0px;top:259.5px;width:400px;text-align:center;color:#606266">临时车</div>
<div class="a" style="left:1426px;top:258px;width:52px;height:24px;border:1px solid #dcdfe6;border-radius:3px;background:#fff"></div>
<div class="t" style="left:1438px;top:263px;color:#606266;font-size:12px;line-height:16px">编 辑</div>
<div class="a" style="left:1490px;top:258px;width:52px;height:24px;background:#ff4d4f;border-radius:3px"></div>
<div class="t" style="left:1502px;top:263px;color:#fff;font-size:12px;line-height:16px;font-weight:500;-webkit-text-stroke:.25px currentColor">删 除</div>
<div class="a" style="left:19px;top:309px;width:14px;height:14px;border:1px solid #dcdfe6;border-radius:2px;background:#fff"></div>
<div class="t" style="left:-117.0px;top:308.5px;width:400px;text-align:center;color:#606266">9</div>
<div class="t" style="left:42.5px;top:308.5px;width:400px;text-align:center;color:#606266">沪A01257</div>
<div class="t" style="left:301.0px;top:308.5px;width:400px;text-align:center;color:#606266">1437666594395066368</div>
<div class="t" style="left:559.0px;top:308.5px;width:400px;text-align:center;color:#606266">2021-08-01 00:00:00</div>
<div class="t" style="left:817.0px;top:308.5px;width:400px;text-align:center;color:#606266">正常</div>
<div class="t" style="left:1075.0px;top:308.5px;width:400px;text-align:center;color:#606266"></div>
<div class="a" style="left:1426px;top:307px;width:52px;height:24px;border:1px solid #dcdfe6;border-radius:3px;background:#fff"></div>
<div class="t" style="left:1438px;top:312px;color:#606266;font-size:12px;line-height:16px">编 辑</div>
<div class="a" style="left:1490px;top:307px;width:52px;height:24px;background:#ff4d4f;border-radius:3px"></div>
<div class="t" style="left:1502px;top:312px;color:#fff;font-size:12px;line-height:16px;font-weight:500;-webkit-text-stroke:.25px currentColor">删 除</div>
<div class="a" style="left:19px;top:359px;width:14px;height:14px;border:1px solid #dcdfe6;border-radius:2px;background:#fff"></div>
<div class="t" style="left:-117.0px;top:358.0px;width:400px;text-align:center;color:#606266">10</div>
<div class="t" style="left:42.5px;top:358.0px;width:400px;text-align:center;color:#606266">沪A51277</div>
<div class="t" style="left:301.0px;top:358.0px;width:400px;text-align:center;color:#606266">1437697501373992960</div>
<div class="t" style="left:559.0px;top:358.0px;width:400px;text-align:center;color:#606266">2021-08-01 00:00:00</div>
<div class="t" style="left:817.0px;top:358.0px;width:400px;text-align:center;color:#606266">正常</div>
<div class="t" style="left:1075.0px;top:358.0px;width:400px;text-align:center;color:#606266"></div>
<div class="a" style="left:1426px;top:357px;width:52px;height:24px;border:1px solid #dcdfe6;border-radius:3px;background:#fff"></div>
<div class="t" style="left:1438px;top:362px;color:#606266;font-size:12px;line-height:16px">编 辑</div>
<div class="a" style="left:1490px;top:357px;width:52px;height:24px;background:#ff4d4f;border-radius:3px"></div>
<div class="t" style="left:1502px;top:362px;color:#fff;font-size:12px;line-height:16px;font-weight:500;-webkit-text-stroke:.25px currentColor">删 除</div>
<div class="a" style="left:19px;top:408px;width:14px;height:14px;border:1px solid #dcdfe6;border-radius:2px;background:#fff"></div>
<div class="t" style="left:-117.0px;top:407.5px;width:400px;text-align:center;color:#606266">11</div>
<div class="t" style="left:42.5px;top:407.5px;width:400px;text-align:center;color:#606266">沪A63122</div>
<div class="t" style="left:301.0px;top:407.5px;width:400px;text-align:center;color:#606266">1437697502024110080</div>
<div class="t" style="left:559.0px;top:407.5px;width:400px;text-align:center;color:#606266">2021-08-01 00:00:00</div>
<div class="t" style="left:817.0px;top:407.5px;width:400px;text-align:center;color:#606266">正常</div>
<div class="t" style="left:1075.0px;top:407.5px;width:400px;text-align:center;color:#606266"></div>
<div class="a" style="left:1426px;top:406px;width:52px;height:24px;border:1px solid #dcdfe6;border-radius:3px;background:#fff"></div>
<div class="t" style="left:1438px;top:411px;color:#606266;font-size:12px;line-height:16px">编 辑</div>
<div class="a" style="left:1490px;top:406px;width:52px;height:24px;background:#ff4d4f;border-radius:3px"></div>
<div class="t" style="left:1502px;top:411px;color:#fff;font-size:12px;line-height:16px;font-weight:500;-webkit-text-stroke:.25px currentColor">删 除</div>
<div class="a" style="left:19px;top:458px;width:14px;height:14px;border:1px solid #dcdfe6;border-radius:2px;background:#fff"></div>
<div class="t" style="left:-117.0px;top:457.0px;width:400px;text-align:center;color:#606266">12</div>
<div class="t" style="left:42.5px;top:457.0px;width:400px;text-align:center;color:#606266">沪A75121</div>
<div class="t" style="left:301.0px;top:457.0px;width:400px;text-align:center;color:#606266">1437697502943830016</div>
<div class="t" style="left:559.0px;top:457.0px;width:400px;text-align:center;color:#606266">2021-08-01 00:00:00</div>
<div class="t" style="left:817.0px;top:457.0px;width:400px;text-align:center;color:#606266">正常</div>
<div class="t" style="left:1075.0px;top:457.0px;width:400px;text-align:center;color:#606266"></div>
<div class="a" style="left:1426px;top:456px;width:52px;height:24px;border:1px solid #dcdfe6;border-radius:3px;background:#fff"></div>
<div class="t" style="left:1438px;top:461px;color:#606266;font-size:12px;line-height:16px">编 辑</div>
<div class="a" style="left:1490px;top:456px;width:52px;height:24px;background:#ff4d4f;border-radius:3px"></div>
<div class="t" style="left:1502px;top:461px;color:#fff;font-size:12px;line-height:16px;font-weight:500;-webkit-text-stroke:.25px currentColor">删 除</div>
<div class="a" style="left:19px;top:507px;width:14px;height:14px;border:1px solid #dcdfe6;border-radius:2px;background:#fff"></div>
<div class="t" style="left:-117.0px;top:506.5px;width:400px;text-align:center;color:#606266">13</div>
<div class="t" style="left:42.5px;top:506.5px;width:400px;text-align:center;color:#606266">沪A71278</div>
<div class="t" style="left:301.0px;top:506.5px;width:400px;text-align:center;color:#606266">1437697504958001600</div>
<div class="t" style="left:559.0px;top:506.5px;width:400px;text-align:center;color:#606266">2021-08-01 00:00:00</div>
<div class="t" style="left:817.0px;top:506.5px;width:400px;text-align:center;color:#606266">正常</div>
<div class="t" style="left:1075.0px;top:506.5px;width:400px;text-align:center;color:#606266"></div>
<div class="a" style="left:1426px;top:505px;width:52px;height:24px;border:1px solid #dcdfe6;border-radius:3px;background:#fff"></div>
<div class="t" style="left:1438px;top:510px;color:#606266;font-size:12px;line-height:16px">编 辑</div>
<div class="a" style="left:1490px;top:505px;width:52px;height:24px;background:#ff4d4f;border-radius:3px"></div>
<div class="t" style="left:1502px;top:510px;color:#fff;font-size:12px;line-height:16px;font-weight:500;-webkit-text-stroke:.25px currentColor">删 除</div>
<div class="a" style="left:229px;top:11px;width:25px;height:25px;background:#e3e4e6"></div>
<div class="a" style="left:229px;top:36px;width:25px;height:12px;background:#f4f4f4"></div>
<div class="a" style="left:229px;top:60px;width:25px;height:24px;background:#e4e5e7"></div>
<div class="a" style="left:229px;top:84px;width:25px;height:1px;background:#f6f6f6"></div>
<div class="a" style="left:232px;top:98px;width:27px;height:11px;background:#f7f7f7"></div>
<div class="a" style="left:232px;top:109px;width:27px;height:23px;background:#e6e6e8"></div>
<div class="a" style="left:236px;top:145px;width:25px;height:11px;background:#f6f6f6"></div>
<div class="a" style="left:236px;top:156px;width:25px;height:24px;background:#e3e4e6"></div>
<div class="a" style="left:236px;top:192px;width:25px;height:12px;background:#f7f7f7"></div>
<div class="a" style="left:236px;top:204px;width:25px;height:24px;background:#dfe0e2"></div>
<div class="a" style="left:235px;top:247px;width:25px;height:17px;background:#f8f8f8"></div>
<div class="a" style="left:235px;top:264px;width:25px;height:12px;background:#dcdddf"></div>
<div class="a" style="left:237px;top:296px;width:24px;height:16px;background:#f8f8f8"></div>
<div class="a" style="left:237px;top:312px;width:24px;height:12px;background:#dcdddf"></div>
<div class="a" style="left:241px;top:360px;width:25px;height:12px;background:#dcdddf"></div>
<div class="a" style="left:241px;top:372px;width:25px;height:19px;background:#f3f3f3"></div>
<div class="a" style="left:241px;top:408px;width:25px;height:12px;background:#dcdddf"></div>
<div class="a" style="left:241px;top:420px;width:25px;height:19px;background:#f0f0f0"></div>
<div class="a" style="left:243px;top:456px;width:24px;height:23px;background:#e1e2e4"></div>
<div class="a" style="left:243px;top:479px;width:24px;height:1px;background:#f3f3f3"></div>
<div class="a" style="left:238px;top:503px;width:26px;height:11px;background:#e6e7e9"></div>
<div class="a" style="left:238px;top:514px;width:26px;height:1px;background:#f3f3f3"></div>
</div>
<div class="a" style="left:1864px;top:335px;width:6px;height:263px;background:rgba(0,0,0,.03);border-radius:3px"></div>
<div class="t" style="left:719px;top:824px;color:#606266">共 193 条</div>
<div class="a" style="left:794px;top:818px;width:128px;height:32px;border:1px solid #dcdfe6;border-radius:4px;background:#fff"></div>
<div class="t" style="left:822px;top:824px;color:#606266">20条/页</div>
<svg style="left:899px;top:831px" width="10" height="6" viewBox="0 0 10 6"><path d="M0.6 0.6L5 5 9.4 0.6" fill="none" stroke="#a8abb2" stroke-width="1.1"/></svg>
<div class="a" style="left:938px;top:818px;width:32px;height:32px;background:#f0f2f5;border-radius:2px"></div>
<svg style="left:950px;top:829px" width="6" height="10" viewBox="0 0 6 10"><path d="M5 0.6L0.9 5 5 9.4" fill="none" stroke="#c0c4cc" stroke-width="1.1"/></svg>
<div class="a" style="left:978px;top:818px;width:32px;height:32px;background:#1890ff;border-radius:2px"></div>
<div class="t" style="left:978.0px;top:824px;width:32px;text-align:center;color:#fff;font-weight:bold">1</div>
<div class="a" style="left:1018px;top:818px;width:32px;height:32px;background:#f0f2f5;border-radius:2px"></div>
<div class="t" style="left:1018.0px;top:824px;width:32px;text-align:center;color:#606266">2</div>
<div class="a" style="left:1058px;top:818px;width:32px;height:32px;background:#f0f2f5;border-radius:2px"></div>
<div class="t" style="left:1058.0px;top:824px;width:32px;text-align:center;color:#606266">3</div>
<div class="a" style="left:1098px;top:818px;width:32px;height:32px;background:#f0f2f5;border-radius:2px"></div>
<div class="t" style="left:1098.0px;top:824px;width:32px;text-align:center;color:#606266">4</div>
<div class="a" style="left:1138px;top:818px;width:32px;height:32px;background:#f0f2f5;border-radius:2px"></div>
<div class="t" style="left:1138.0px;top:824px;width:32px;text-align:center;color:#606266">5</div>
<div class="a" style="left:1178px;top:818px;width:32px;height:32px;background:#f0f2f5;border-radius:2px"></div>
<div class="t" style="left:1178.0px;top:824px;width:32px;text-align:center;color:#606266">6</div>
<div class="a" style="left:1218px;top:818px;width:32px;height:32px;background:#f0f2f5;border-radius:2px"></div>
<svg style="left:1227px;top:832px" width="14" height="4" viewBox="0 0 14 4"><circle cx="2" cy="2" r="1.6" fill="#606266"/><circle cx="7" cy="2" r="1.6" fill="#606266"/><circle cx="12" cy="2" r="1.6" fill="#606266"/></svg>
<div class="a" style="left:1258px;top:818px;width:32px;height:32px;background:#f0f2f5;border-radius:2px"></div>
<div class="t" style="left:1258.0px;top:824px;width:32px;text-align:center;color:#606266">10</div>
<div class="a" style="left:1298px;top:818px;width:32px;height:32px;background:#f0f2f5;border-radius:2px"></div>
<svg style="left:1311px;top:829px" width="6" height="10" viewBox="0 0 6 10"><path d="M0.9 0.6L5 5 0.9 9.4" fill="none" stroke="#606266" stroke-width="1.1"/></svg>
<div class="t" style="left:1346px;top:824px;color:#606266">前往</div>
<div class="a" style="left:1382px;top:818px;width:56px;height:32px;border:1px solid #dcdfe6;border-radius:4px;background:#fff"></div>
<div class="t" style="left:1382.0px;top:824px;width:56px;text-align:center;color:#606266">1</div>
<div class="t" style="left:1446px;top:824px;color:#606266">页</div>
<div class="a" style="left:286px;top:872px;width:1606px;height:0;border-top:1px dashed #dcdfe6"></div>
<div class="t" style="left:987px;top:890px;color:#909399">Copyright</div>
<svg style="left:1053px;top:892px" width="15" height="15" viewBox="0 0 15 15"><circle cx="7.5" cy="7.5" r="6.5" fill="none" stroke="#909399" stroke-width="1.2"/><path d="M9.6 5.6a2.8 2.8 0 1 0 0 3.8" fill="none" stroke="#909399" stroke-width="1.2"/></svg>
<div class="t" style="left:1073px;top:890px;color:#909399">2022 智慧管理系统</div>
</body>
</html>
